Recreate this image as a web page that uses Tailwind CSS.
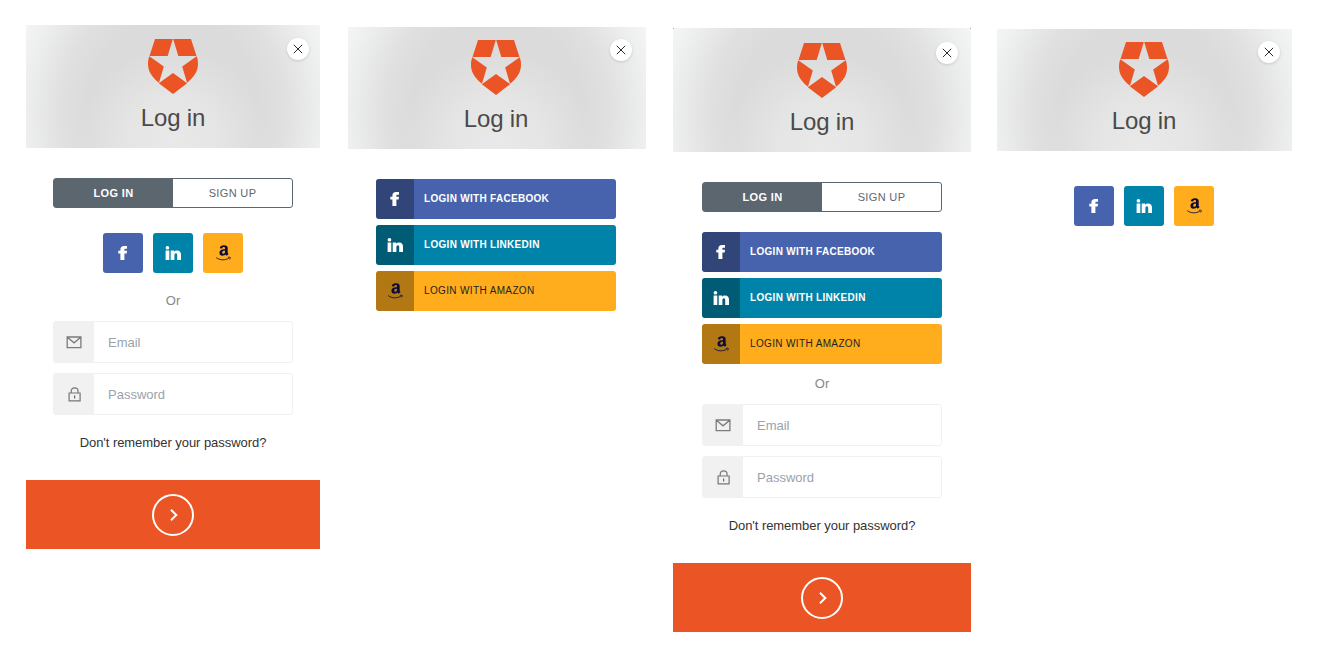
<!DOCTYPE html>
<html lang="en">
<head>
<meta charset="utf-8">
<title>Log in</title>
<script src="https://cdn.jsdelivr.net/npm/@tailwindcss/browser@4"></script>
</head>
<body class="bg-white overflow-hidden font-['Liberation_Sans',Arial,sans-serif]">
<svg class="hidden">
  <symbol id="shield" viewBox="0 0 50 55"><path fill="#eb5424" d="M7 0H24.8L19.7 17H1.500zM25.2 0H43L48.500 17H30.300zM1.300 17.300 15.800 27.500 11 43.800C4 38.500 0 32 0 25 0 22 .4 19.500 1.300 17.300zM48.700 17.300 34.200 27.500 39 43.800C46 38.500 50 32 50 25 50 22 49.600 19.500 48.700 17.300zM25 34 39.200 44.200 25 55 10.800 44.200z"/></symbol>
  <symbol id="fb" viewBox="0 0 16 16"><path fill="#fff" d="M5.400 15V8.600H3.300V5.700H5.400V4.600C5.400 2.200 6.700 1 9 1H12V3.700H10.500C9.600 3.700 9.400 4 9.400 4.700V5.700H12L11.700 8.600H9.400V15z"/></symbol>
  <symbol id="li" viewBox="0 0 16 16"><path fill="#fff" d="M.6 5.600H4.300V15H.6zM2.450 .9A1.850 1.850 0 1 1 2.440 4.600 1.850 1.850 0 0 1 2.450 .9zM5.700 5.600H9.100V6.700C9.700 5.900 10.700 5.400 12 5.400 14.900 5.400 16 7.100 16 9.800V15H12.200V10.200C12.200 9 11.900 8.300 10.900 8.300 9.800 8.300 9.400 9.100 9.400 10.200V15H5.700z"/></symbol>
  <symbol id="az" viewBox="0 0 24 24"><path fill="#0d0a3c" transform="translate(-.6 -1) scale(1.1 1.080)" d="M6.610 11.802c0-1.005.247-1.863.743-2.577.495-.71 1.170-1.250 2.040-1.615.796-.335 1.756-.575 2.912-.72.39-.046 1.033-.103 1.920-.174v-.37c0-.93-.105-1.558-.3-1.875-.302-.43-.78-.65-1.440-.65h-.182c-.48.046-.896.196-1.246.46-.35.27-.575.63-.675 1.096-.06.3-.206.465-.435.51l-2.520-.315c-.248-.06-.372-.18-.372-.39 0-.046.007-.09.022-.15.247-1.290.855-2.250 1.820-2.880.976-.616 2.100-.975 3.390-1.050h.54c1.650 0 2.957.434 3.888 1.290.135.15.27.3.405.48.12.165.224.314.283.45.075.134.15.33.195.57.06.254.105.42.135.51.03.104.062.3.076.615.01.313.02.493.02.553v5.280c0 .376.06.72.165 1.036.105.313.21.54.315.674l.51.674c.09.136.136.256.136.36 0 .12-.06.226-.18.314-1.200 1.050-1.860 1.620-1.963 1.710-.165.135-.375.15-.63.045a6.062 6.062 0 01-.526-.496l-.31-.347a9.391 9.391 0 01-.317-.42l-.3-.435c-.81.886-1.603 1.440-2.400 1.665-.494.15-1.093.227-1.830.227-1.110 0-2.040-.343-2.760-1.034-.72-.69-1.080-1.665-1.080-2.940l-.05-.076zm3.753-.438c0 .566.14 1.020.425 1.364.285.34.675.512 1.155.512.045 0 .106-.007.195-.02.09-.016.134-.023.166-.023.614-.16 1.080-.553 1.424-1.178.165-.28.285-.58.36-.91.09-.32.12-.59.135-.8.015-.195.015-.54.015-1.005v-.54c-.84 0-1.484.06-1.920.18-1.275.36-1.920 1.170-1.920 2.430l-.035-.02z"/><path d="M1.800 18.900C7.500 23.200 15 23.200 20.800 19.700M19.300 18.700C21 18.200 22.700 18.200 22.900 18.600 23.100 19 22.700 20.600 21.900 21.700" stroke="#0d0a3c" stroke-width="1.300" fill="none"/></symbol>
  <symbol id="x" viewBox="0 0 10 10"><path d="M.8.8 9.200 9.200M9.200.8.8 9.200" stroke="#2a2a2a" stroke-width="1" fill="none"/></symbol>
  <symbol id="mail" viewBox="0 0 16 13"><path d="M1.200 1H14.900V11.700H1.200zM1.400 1.200 8.050 6.800 14.700 1.200" stroke="#7b7b7b" stroke-width="1.300" fill="none"/></symbol>
  <symbol id="lock" viewBox="0 0 13 15"><path d="M1.100 6H12.100V13.900H1.100zM3.200 6V3.900C3.200 2 4.600.9 6.600.9S10 2 10 3.900V6" stroke="#777" stroke-width="1.200" fill="none"/><path d="M6 8.600H7.200V11.500H6z" fill="#666"/></symbol>
  <symbol id="go" viewBox="0 0 42 42"><circle cx="21" cy="21" r="20" stroke="#fff" stroke-width="2" fill="none"/><path d="M19 15.700 24.300 21 19 26.300" stroke="#fff" stroke-width="2" fill="none"/></symbol>
</svg>

<main class="flex items-start pl-[26px]">

  <!-- Small social buttons with the form -->
  <section class="w-[294px] mt-[25px] shrink-0">
    <header class="relative h-[123px] pt-[14px] flex flex-col items-center gap-3 bg-[radial-gradient(circle_at_50%_95%,#e9e9e9_0,#e5e5e5_45px,#e4e4e400_95px),radial-gradient(ellipse_170px_190px_at_50%_70%,#dbdbdb_0,#dbdbdb_50%,#e0e0e0_66%,#eeefef_88%,#f5f6f6_100%)]">
      <svg class="w-[50px] h-[55px]"><use href="#shield"/></svg>
      <h1 class="text-[24px] leading-6 tracking-[-.15px] text-[#4a4a4a]">Log in</h1>
      <button class="absolute top-[13px] right-[11px] size-[22px] rounded-full bg-white shadow-[0_1px_3px_rgba(0,0,0,.14)] grid place-items-center"><svg class="size-[10px]"><use href="#x"/></svg></button>
    </header>
    <div class="w-60 mx-auto pt-[30px]">
      <div class="flex h-[30px] border border-[#5c666f] rounded-[3px] text-[11px] tracking-[.35px] text-center leading-[29px]">
        <b class="w-[119px] bg-[#5c666f] text-white">LOG IN</b><span class="flex-1 text-[#5c666f]">SIGN UP</span>
      </div>
      <div class="flex justify-center gap-[10px] mt-[25px]">
        <a class="size-10 rounded-[3px] bg-[#4863ae] grid place-items-center"><svg class="size-4"><use href="#fb"/></svg></a>
        <a class="size-10 rounded-[3px] bg-[#0083a8] grid place-items-center"><svg class="size-4"><use href="#li"/></svg></a>
        <a class="size-10 rounded-[3px] bg-[#ffad1d] grid place-items-center"><svg class="size-4"><use href="#az"/></svg></a>
      </div>
      <p class="text-[13px] leading-4 mt-5 text-center text-[#888]">Or</p>
      <div class="mt-3 h-[42px] flex border border-[#f1f1f1] rounded-[3px] text-[13px] leading-[41px] text-[#9ba2aa]">
        <span class="w-10 bg-[#f1f1f1] grid place-items-center"><svg class="w-4 h-[13px]"><use href="#mail"/></svg></span><span class="pl-[14px]">Email</span>
      </div>
      <div class="mt-[10px] h-[42px] flex border border-[#f1f1f1] rounded-[3px] text-[13px] leading-[41px] text-[#9ba2aa]">
        <span class="w-10 bg-[#f1f1f1] grid place-items-center"><svg class="w-[13px] h-[15px]"><use href="#lock"/></svg></span><span class="pl-[14px]">Password</span>
      </div>
      <p class="text-[13px] leading-4 mt-5 tracking-[-.05px] text-center text-[#333] whitespace-nowrap">Don't remember your password?</p>
    </div>
    <div class="mt-[29px] h-[69px] bg-[#eb5424] grid place-items-center"><svg class="size-[42px]"><use href="#go"/></svg></div>
  </section>

  <!-- Large social buttons only -->
  <section class="w-[298px] mt-[27px] ml-[28px] shrink-0">
    <header class="relative h-[122px] pt-[13px] pr-[2px] flex flex-col items-center gap-3 bg-[radial-gradient(circle_at_50%_95%,#e9e9e9_0,#e5e5e5_45px,#e4e4e400_95px),radial-gradient(ellipse_170px_190px_at_50%_70%,#dbdbdb_0,#dbdbdb_50%,#e0e0e0_66%,#eeefef_88%,#f5f6f6_100%)]">
      <svg class="w-[50px] h-[55px]"><use href="#shield"/></svg>
      <h1 class="text-[24px] leading-6 tracking-[-.15px] text-[#4a4a4a]">Log in</h1>
      <button class="absolute top-[12px] right-[14px] size-[22px] rounded-full bg-white shadow-[0_1px_3px_rgba(0,0,0,.14)] grid place-items-center"><svg class="size-[10px]"><use href="#x"/></svg></button>
    </header>
    <div class="w-60 ml-[28px] pt-[30px] flex flex-col gap-[6px] text-[10px] tracking-[.3px] leading-[39px]">
      <a class="flex h-10 rounded-[3px] overflow-hidden bg-[#4863ae] text-white font-bold"><span class="w-[38px] mr-[10px] bg-black/30 grid place-items-center"><svg class="size-4"><use href="#fb"/></svg></span>LOGIN WITH FACEBOOK</a>
      <a class="flex h-10 rounded-[3px] overflow-hidden bg-[#0083a8] text-white font-bold"><span class="w-[38px] mr-[10px] bg-black/30 grid place-items-center"><svg class="size-4"><use href="#li"/></svg></span>LOGIN WITH LINKEDIN</a>
      <a class="flex h-10 rounded-[3px] overflow-hidden bg-[#ffad1d] text-[#222] tracking-[.36px]"><span class="w-[38px] mr-[10px] bg-black/30 grid place-items-center"><svg class="size-4"><use href="#az"/></svg></span>LOGIN WITH AMAZON</a>
    </div>
  </section>

  <!-- Large social buttons with the form -->
  <section class="w-[298px] mt-[28px] ml-[27px] shrink-0">
    <header class="relative h-[124px] pt-[15px] flex flex-col items-center gap-3 bg-[radial-gradient(circle_at_50%_95%,#e9e9e9_0,#e5e5e5_45px,#e4e4e400_95px),radial-gradient(ellipse_170px_190px_at_50%_70%,#dbdbdb_0,#dbdbdb_50%,#e0e0e0_66%,#eeefef_88%,#f5f6f6_100%)]">
      <i class="absolute top-0 left-0 size-px bg-[#aaa]"></i><i class="absolute top-0 right-0 size-px bg-[#aaa]"></i>
      <svg class="w-[50px] h-[55px]"><use href="#shield"/></svg>
      <h1 class="text-[24px] leading-6 tracking-[-.15px] text-[#4a4a4a]">Log in</h1>
      <button class="absolute top-[14px] right-[13px] size-[22px] rounded-full bg-white shadow-[0_1px_3px_rgba(0,0,0,.14)] grid place-items-center"><svg class="size-[10px]"><use href="#x"/></svg></button>
    </header>
    <div class="w-60 mx-auto pt-[30px]">
      <div class="flex h-[30px] border border-[#5c666f] rounded-[3px] text-[11px] tracking-[.35px] text-center leading-[29px]">
        <b class="w-[119px] bg-[#5c666f] text-white">LOG IN</b><span class="flex-1 text-[#5c666f]">SIGN UP</span>
      </div>
      <div class="mt-5 flex flex-col gap-[6px] text-[10px] tracking-[.3px] leading-[39px]">
        <a class="flex h-10 rounded-[3px] overflow-hidden bg-[#4863ae] text-white font-bold"><span class="w-[38px] mr-[10px] bg-black/30 grid place-items-center"><svg class="size-4"><use href="#fb"/></svg></span>LOGIN WITH FACEBOOK</a>
        <a class="flex h-10 rounded-[3px] overflow-hidden bg-[#0083a8] text-white font-bold"><span class="w-[38px] mr-[10px] bg-black/30 grid place-items-center"><svg class="size-4"><use href="#li"/></svg></span>LOGIN WITH LINKEDIN</a>
        <a class="flex h-10 rounded-[3px] overflow-hidden bg-[#ffad1d] text-[#222] tracking-[.36px]"><span class="w-[38px] mr-[10px] bg-black/30 grid place-items-center"><svg class="size-4"><use href="#az"/></svg></span>LOGIN WITH AMAZON</a>
      </div>
      <p class="text-[13px] leading-4 mt-3 text-center text-[#888]">Or</p>
      <div class="mt-3 h-[42px] flex border border-[#f1f1f1] rounded-[3px] text-[13px] leading-[41px] text-[#9ba2aa]">
        <span class="w-10 bg-[#f1f1f1] grid place-items-center"><svg class="w-4 h-[13px]"><use href="#mail"/></svg></span><span class="pl-[14px]">Email</span>
      </div>
      <div class="mt-[10px] h-[42px] flex border border-[#f1f1f1] rounded-[3px] text-[13px] leading-[41px] text-[#9ba2aa]">
        <span class="w-10 bg-[#f1f1f1] grid place-items-center"><svg class="w-[13px] h-[15px]"><use href="#lock"/></svg></span><span class="pl-[14px]">Password</span>
      </div>
      <p class="text-[13px] leading-4 mt-5 tracking-[-.05px] text-center text-[#333] whitespace-nowrap">Don't remember your password?</p>
    </div>
    <div class="mt-[29px] h-[69px] bg-[#eb5424] grid place-items-center"><svg class="size-[42px]"><use href="#go"/></svg></div>
  </section>

  <!-- Small social buttons only -->
  <section class="w-[295px] mt-[29px] ml-[26px] shrink-0">
    <header class="relative h-[122px] pt-[13px] pr-px flex flex-col items-center gap-3 bg-[radial-gradient(circle_at_50%_95%,#e9e9e9_0,#e5e5e5_45px,#e4e4e400_95px),radial-gradient(ellipse_170px_190px_at_50%_70%,#dbdbdb_0,#dbdbdb_50%,#e0e0e0_66%,#eeefef_88%,#f5f6f6_100%)]">
      <svg class="w-[50px] h-[55px]"><use href="#shield"/></svg>
      <h1 class="text-[24px] leading-6 tracking-[-.15px] text-[#4a4a4a]">Log in</h1>
      <button class="absolute top-[12px] right-[12px] size-[22px] rounded-full bg-white shadow-[0_1px_3px_rgba(0,0,0,.14)] grid place-items-center"><svg class="size-[10px]"><use href="#x"/></svg></button>
    </header>
    <div class="flex justify-center gap-[10px] pt-[35px] pr-px">
      <a class="size-10 rounded-[3px] bg-[#4863ae] grid place-items-center"><svg class="size-4"><use href="#fb"/></svg></a>
      <a class="size-10 rounded-[3px] bg-[#0083a8] grid place-items-center"><svg class="size-4"><use href="#li"/></svg></a>
      <a class="size-10 rounded-[3px] bg-[#ffad1d] grid place-items-center"><svg class="size-4"><use href="#az"/></svg></a>
    </div>
  </section>
</main>
</body>
</html>
